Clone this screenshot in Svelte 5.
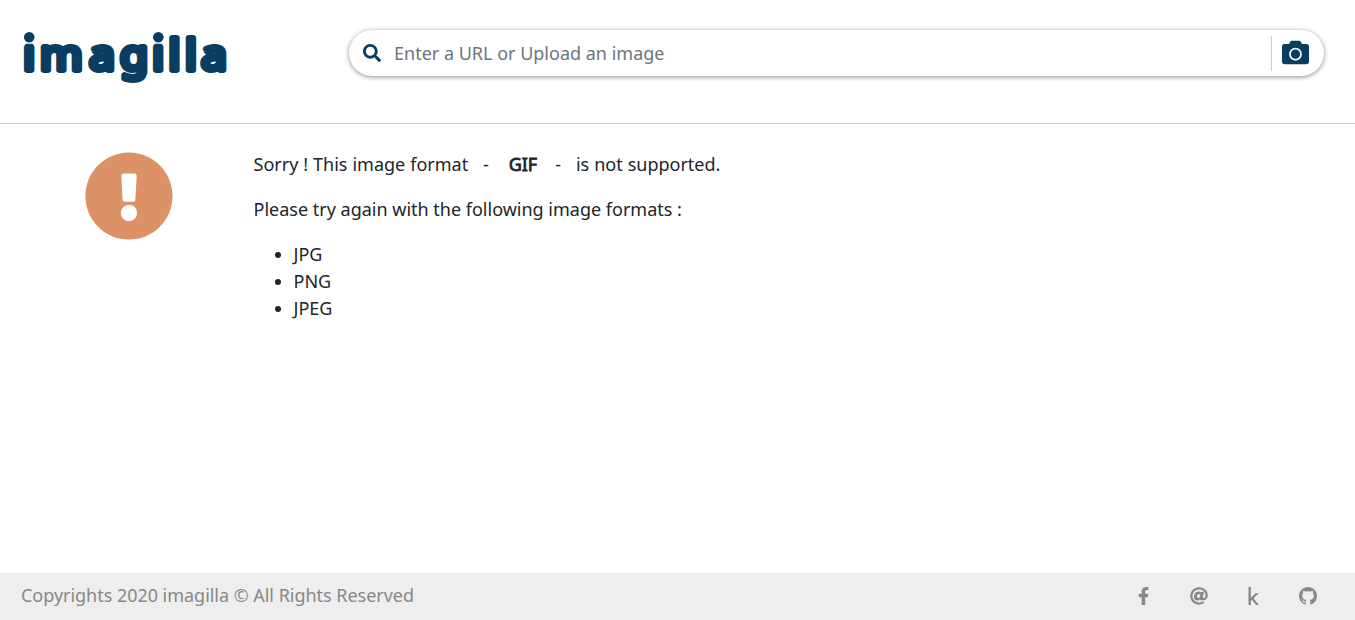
<script>
  const formats = ['JPG', 'PNG', 'JPEG'];
  const links = [
    { name: 'Facebook', width: 11.25, box: '0 0 320 512', d: 'M279.14 288l14.22-92.66h-88.91v-60.13c0-25.35 12.42-50.06 52.24-50.06h40.42V6.26S260.43 0 225.36 0c-73.22 0-121.08 44.38-121.08 124.72v70.62H22.89V288h81.39v224h100.17V288z' },
    { name: 'Email', width: 18, box: '0 0 512 512', d: 'M256 8C118.941 8 8 118.919 8 256c0 137.059 110.919 248 248 248 48.154 0 95.342-14.14 135.408-40.223 12.005-7.815 14.625-24.288 5.552-35.372l-10.177-12.433c-7.671-9.371-21.179-11.667-31.373-5.129C325.92 429.757 291.314 440 256 440c-101.458 0-184-82.542-184-184S154.542 72 256 72c100.139 0 184 57.619 184 160 0 38.786-21.093 79.742-58.17 83.693-17.349-.454-16.91-12.857-13.476-30.024l23.433-121.11C394.653 149.75 383.308 136 368.225 136h-44.981a13.518 13.518 0 0 0-13.432 11.993l-.01.092c-14.697-17.901-40.448-21.775-59.971-21.775-74.58 0-137.831 62.234-137.831 151.46 0 65.303 36.785 105.87 96 105.87 26.984 0 57.369-15.637 74.991-38.333 9.522 34.104 40.613 34.104 70.71 34.104C462.609 379.41 504 307.798 504 232 504 95.653 394.023 8 256 8zm-21.68 304.43c-22.249 0-36.07-15.623-36.07-40.771 0-44.993 30.779-72.729 58.63-72.729 22.292 0 35.601 15.241 35.601 40.77 0 45.061-33.875 72.73-58.161 72.73z' },
    { name: 'Kaggle', width: 11.25, box: '0 0 320 512', d: 'M304.2 501.5L158.4 320.3 298.2 185c2.6-2.7 1.7-10.5-5.3-10.5h-69.2c-3.5 0-7 1.8-10.5 5.3L80.9 313.5V7.5q0-7.5-7.5-7.5H21.5Q14 0 14 7.5v497q0 7.5 7.5 7.5h51.9q7.5 0 7.5-7.5v-109l30.8-29.3 110.5 140.6c3 3.5 6.5 5.3 10.5 5.3h66.9q5.25 0 6-3z' },
    { name: 'GitHub', width: 18, box: '0 0 16 16', d: 'M8 0C3.58 0 0 3.58 0 8c0 3.54 2.29 6.53 5.47 7.59.4.07.55-.17.55-.38 0-.19-.01-.82-.01-1.49-2.01.37-2.53-.49-2.69-.94-.09-.23-.48-.94-.82-1.13-.28-.15-.68-.52-.01-.53.63-.01 1.08.58 1.23.82.72 1.21 1.87.87 2.33.66.07-.52.28-.87.51-1.07-1.78-.2-3.64-.89-3.64-3.95 0-.87.31-1.59.82-2.15-.08-.2-.36-1.02.08-2.12 0 0 .67-.21 2.2.82.64-.18 1.32-.27 2-.27s1.36.09 2 .27c1.53-1.04 2.2-.82 2.2-.82.44 1.1.16 1.92.08 2.12.51.56.82 1.27.82 2.15 0 3.07-1.87 3.75-3.65 3.95.29.25.54.73.54 1.48 0 1.07-.01 1.93-.01 2.2 0 .21.15.46.55.38A8.01 8.01 0 0 0 16 8c0-4.42-3.58-8-8-8z' }
  ];
</script>

<div class="page">
  <header>
    <svg class="logo" width="228" height="72" viewBox="0 0 228 72">
      <!-- the stems of both i's are clipped below their round dots -->
      <clipPath id="stems">
        <rect x="3" y="22.7" width="12" height="32" rx="3" />
        <rect x="16" y="0" width="115" height="72" />
        <rect x="132" y="22.7" width="12.3" height="32" rx="3" />
        <rect x="146" y="0" width="82" height="72" />
      </clipPath>
      <g clip-path="url(#stems)">
        <text transform="scale(1.07 1)" y="49" x="3.1 18.7 64.65 93.5 123.65 138.9 154.2 169.3">imagilla</text>
      </g>
      <circle cx="9.2" cy="16.2" r="5.3" />
      <circle cx="138.3" cy="16.2" r="5.3" />
    </svg>
    <div class="search">
      <svg class="glass" width="18" height="18" viewBox="0 0 512 512"><path d="M505 442.7L405.3 343c-4.5-4.5-10.6-7-17-7H372c27.6-35.3 44-79.7 44-128C416 93.1 322.9 0 208 0S0 93.1 0 208s93.1 208 208 208c48.3 0 92.7-16.4 128-44v16.3c0 6.4 2.5 12.5 7 17l99.7 99.7c9.4 9.4 24.6 9.4 33.9 0l28.3-28.3c9.4-9.4 9.4-24.6.1-34zM208 336c-70.7 0-128-57.2-128-128 0-70.7 57.2-128 128-128 70.7 0 128 57.2 128 128 0 70.7-57.2 128-128 128z" /></svg>
      <input type="text" placeholder="Enter a URL or Upload an image" />
      <button class="upload" aria-label="Upload">
        <svg width="27" height="27" viewBox="0 0 512 512"><path d="M512 144v288c0 26.5-21.5 48-48 48H48c-26.5 0-48-21.5-48-48V144c0-26.5 21.5-48 48-48h88l12.3-32.9c7-18.7 24.9-31.1 44.9-31.1h125.5c20 0 37.9 12.4 44.9 31.1L376 96h88c26.5 0 48 21.5 48 48zM376 288c0-66.2-53.8-120-120-120s-120 53.8-120 120 53.8 120 120 120 120-53.8 120-120zm-32 0c0 48.5-39.5 88-88 88s-88-39.5-88-88 39.5-88 88-88 88 39.5 88 88z" /></svg>
      </button>
    </div>
  </header>

  <main>
    <svg class="alert" width="90" height="90" viewBox="0 0 512 512"><path d="M504 256c0 136.997-111.043 248-248 248S8 392.997 8 256C8 119.083 119.043 8 256 8s248 111.083 248 248zm-248 50c-25.405 0-46 20.595-46 46s20.595 46 46 46 46-20.595 46-46-20.595-46-46-46zm-43.673-165.346l7.418 136c.347 6.364 5.609 11.346 11.982 11.346h48.546c6.373 0 11.635-4.982 11.982-11.346l7.418-136c.375-6.874-5.098-12.654-11.982-12.654h-63.383c-6.884 0-12.356 5.78-11.981 12.654z" /></svg>
    <section>
      <p class="reason">Sorry ! This image format &nbsp; - &nbsp;&nbsp; <b>GIF</b> &nbsp;&nbsp; - &nbsp; is not supported.</p>
      <p>Please try again with the following image formats :</p>
      <ul>
        {#each formats as format}<li>{format}</li>{/each}
      </ul>
    </section>
  </main>

  <footer>
    <span>Copyrights 2020 imagilla © All Rights Reserved</span>
    <nav>
      {#each links as link}
        <a href="#top" aria-label={link.name}>
          <svg width={link.width} height="18" viewBox={link.box}><path d={link.d} /></svg>
        </a>
      {/each}
    </nav>
  </footer>
</div>

<style>
  :global(body) { margin: 0; background: #fff; }
  .page {
    display: flex;
    flex-direction: column;
    height: 620px;
    color: #212529;
    font: 18px/27px "Noto Sans", sans-serif;
  }
  svg { display: block; fill: currentColor; }
  header {
    box-sizing: border-box;
    display: flex;
    align-items: flex-start;
    height: 124px;
    padding: 21px 31.5px 0 20px;
    border-bottom: 1px solid #ccc;
    color: #0a3d62;
  }
  .logo { flex: none; margin-right: 100.5px; }
  .logo text {
    font: 400 42.5px "Noto Sans", sans-serif;
    fill: #0a3d62;
    stroke: #0a3d62;
    stroke-width: 6px;
    stroke-linejoin: round;
  }
  .search {
    box-sizing: border-box;
    flex: 1;
    display: flex;
    align-items: center;
    height: 46px;
    margin-top: 9px;
    padding: 0 14.5px;
    border-radius: 23px;
    background: #fff;
    box-shadow: 0 1px 5px rgba(0, 0, 0, 0.45);
  }
  input {
    flex: 1;
    min-width: 0;
    height: 36px;
    box-sizing: border-box;
    margin: 0;
    padding: 0 0 0 13px;
    border: 0;
    outline: 0;
    background: transparent;
    font: 18px "Noto Sans", sans-serif;
  }
  input::placeholder { color: #6c757d; opacity: 1; }
  .upload {
    height: 35px;
    padding: 0 0.5px 1px 9.5px;
    border: 0;
    border-left: 1px solid #ccc;
    background: none;
    color: inherit;
  }
  main { flex: 1; display: flex; padding: 27px 84px 0; }
  .alert { flex: none; margin-right: 79.5px; color: #dc9166; }
  p { margin: 0 0 18px; }
  .reason { word-spacing: 0.28px; }
  b { margin-right: -1.8px; font-weight: 400; -webkit-text-stroke: 0.8px currentColor; }
  ul { margin: 0; padding-left: 40px; }
  footer {
    display: flex;
    align-items: center;
    justify-content: space-between;
    box-sizing: border-box;
    height: 47px;
    padding: 0 20px 2px 21px;
    background: #eee;
    color: #888;
  }
  footer span { letter-spacing: -0.03px; }
  nav { display: flex; padding-top: 1px; }
  a { display: flex; justify-content: center; width: 54.6px; color: inherit; }
  a:nth-child(3) svg { margin-left: 2px; }
</style>
